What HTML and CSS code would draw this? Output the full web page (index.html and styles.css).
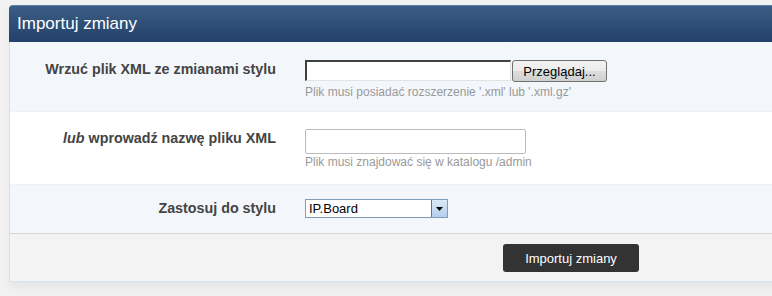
FILE: index.html
```html
<!DOCTYPE html>
<html lang="pl">
<head>
  <meta charset="UTF-8" />
  <title>Importuj zmiany</title>
  <link rel="stylesheet" href="styles.css">
</head>
<body>
  <div class="container">
    <h2 class="header">Importuj zmiany</h2>

    <div class="row row-alt">
      <label class="label">Wrzuć plik XML ze zmianami stylu</label>
      <div class="field">
        <div class="file-input">
          <span class="file-box"></span>
          <button class="file-btn">Przeglądaj...</button>
        </div>
        <div class="hint hint-file">Plik musi posiadać rozszerzenie '.xml' lub '.xml.gz'</div>
      </div>
    </div>

    <div class="row">
      <label class="label"><em>lub</em> wprowadź nazwę pliku XML</label>
      <div class="field">
        <input type="text" class="text-input">
        <div class="hint">Plik musi znajdować się w katalogu /admin</div>
      </div>
    </div>

    <div class="row row-alt row-last">
      <label class="label">Zastosuj do stylu</label>
      <div class="field">
        <div class="select">
          <span class="select-value">IP.Board</span>
          <span class="select-arrow">
            <svg width="7" height="4" viewBox="0 0 7 4"><polygon points="0,0 7,0 3.5,4" fill="#000"/></svg>
          </span>
        </div>
      </div>
    </div>

    <div class="footer">
      <button class="submit">Importuj zmiany</button>
    </div>
  </div>
</body>
</html>
```

FILE: styles.css
```css
html, body {
  margin: 0;
  overflow: hidden;
}
body {
  font-family: "Liberation Sans", Arial, sans-serif;
  background: #f2f2f2;
  padding: 5px 0 0 9px;
  height: 296px;
  box-sizing: border-box;
}
.container {
  width: 1122px;
  background: #fff;
  border-left: 1px solid #d5e2ef;
  border-bottom: 1px solid #d5e2ef;
  border-top-left-radius: 4px;
  box-shadow: 0 6px 10px rgba(0,0,0,0.05);
}
.header {
  margin: 0 0 0 -1px;
  height: 37px;
  box-sizing: border-box;
  padding: 8px 0 0 8px;
  font-size: 17px;
  font-weight: normal;
  color: #fff;
  background: linear-gradient(to bottom, #3b5d84, #23416a);
  border-top: 1px solid #5a7ea6;
  border-top-left-radius: 4px;
}
.row {
  display: grid;
  grid-template-columns: 266px 1fr;
  column-gap: 29px;
  padding: 18px 0 12px;
  border-bottom: 1px solid #eef2f6;
}
.row + .row {
  padding: 17px 0 15px;
}
.row-alt {
  background: #f3f7fb;
}
.row.row-last {
  padding: 14px 0 15px;
  border-bottom: 1px solid #d5d5d5;
}
.label {
  text-align: right;
  font-weight: bold;
  font-size: 14.3px;
  line-height: 16px;
  color: #444;
  padding-top: 1px;
}
.label em {
  font-style: italic;
}
.field {
  display: flex;
  flex-direction: column;
  align-items: flex-start;
}
.hint {
  font-size: 12px;
  line-height: 14px;
  color: #999;
  margin-top: 1px;
}
.hint-file {
  margin-top: 3px;
}
.file-input {
  display: flex;
  align-items: flex-start;
}
.file-box {
  width: 203px;
  height: 18px;
  background: #fff;
  border-top: 2px solid #404040;
  border-left: 2px solid #404040;
  border-right: 1px solid #e3e3e3;
  border-bottom: 1px solid #e3e3e3;
}
.file-btn {
  width: 95px;
  height: 22px;
  margin-left: 1px;
  font-family: "Liberation Sans", Arial, sans-serif;
  font-size: 13px;
  color: #000;
  padding: 0;
  border: 1px solid #707070;
  border-radius: 3px;
  background: linear-gradient(to bottom, #f2f2f2 0%, #ebebeb 50%, #dddddd 51%, #cfcfcf 100%);
}
.text-input {
  width: 221px;
  height: 25px;
  box-sizing: border-box;
  margin: 0;
  border: 1px solid #bbb;
  border-radius: 2px;
  background: #fff;
}
.select {
  display: flex;
  width: 143px;
  height: 19px;
  box-sizing: border-box;
  border: 1px solid #7f9db9;
  background: #fff;
}
.select-value {
  flex: 1;
  font-size: 13px;
  color: #000;
  padding: 1px 0 0 3px;
}
.select-arrow {
  width: 15px;
  display: flex;
  align-items: center;
  justify-content: center;
  border-left: 1px solid #4c7cad;
  background: linear-gradient(to bottom, #dbe8f7, #b5cfee);
}
.footer {
  background: #f3f3f3;
  text-align: center;
  padding: 10px 0 9px;
}
.submit {
  height: 28px;
  width: 136px;
  background: #333;
  color: #fff;
  border: none;
  border-radius: 3px;
  font-family: "Liberation Sans", Arial, sans-serif;
  font-size: 13px;
  cursor: pointer;
}
```
